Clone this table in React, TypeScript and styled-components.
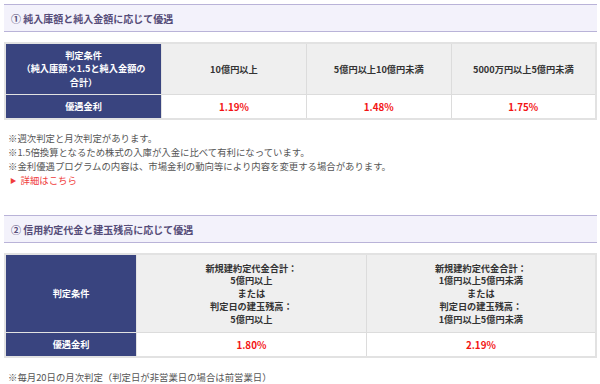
import React from 'react'
import styled, { createGlobalStyle } from 'styled-components'

const GlobalStyle = createGlobalStyle`
  html, body {
    margin: 0;
    padding: 0;
    background: #fff;
  }
  body {
    font-family: "Noto Sans CJK JP", "Noto Sans", sans-serif;
    color: #333;
  }
`

interface RateColumn {
  condition: string[]
  rate: string
}

const inflowColumns: RateColumn[] = [
  { condition: ['10億円以上'], rate: '1.19%' },
  { condition: ['5億円以上10億円未満'], rate: '1.48%' },
  { condition: ['5000万円以上5億円未満'], rate: '1.75%' }
]

const marginColumns: RateColumn[] = [
  {
    condition: ['新規建約定代金合計：', '5億円以上', 'または', '判定日の建玉残高：', '5億円以上'],
    rate: '1.80%'
  },
  {
    condition: ['新規建約定代金合計：', '1億円以上5億円未満', 'または', '判定日の建玉残高：', '1億円以上5億円未満'],
    rate: '2.19%'
  }
]

const Page = styled.div`
  padding: 4px 3px 0 4px;
`

const SectionHeader = styled.h2<{ $gap: number }>`
  margin: ${p => p.$gap}px 0 0;
  height: 26px;
  display: flex;
  align-items: center;
  padding-left: 7px;
  background: #f3f2fb;
  border-top: 1px solid #b9b3d8;
  border-bottom: 1px solid #b9b3d8;
  font-size: 10px;
  font-weight: 700;
  color: #554c78;
`

const Table = styled.table`
  width: 100%;
  margin-top: 10px;
  border-collapse: collapse;
  table-layout: fixed;
  border: 2px solid #e2e2e2;
`

const LabelCell = styled.th<{ $width: number }>`
  width: ${p => p.$width}px;
  background: #39447f;
  color: #fff;
  font-size: 9.2px;
  font-weight: 700;
  line-height: 13.5px;
  text-align: center;
  border: 1px solid #e2e2e2;
  padding: 0 4px;
`

const ConditionCell = styled.td<{ $height: number }>`
  height: ${p => p.$height}px;
  background: #efefef;
  color: #333;
  font-size: 9.2px;
  font-weight: 700;
  line-height: 12.8px;
  text-align: center;
  border: 1px solid #dcdcdc;
  padding: 0;
`

const RateCell = styled.td`
  height: 23px;
  background: #fff;
  color: #f31414;
  font-size: 9.8px;
  font-weight: 700;
  text-align: center;
  border: 1px solid #dcdcdc;
  padding: 0;
`

const Notes = styled.div<{ $top: number }>`
  margin-top: ${p => p.$top}px;
  padding-left: 4px;
  font-size: 9.4px;
  line-height: 14px;
  color: #555;
`

const Note = styled.p`
  margin: 0;
  white-space: nowrap;
`

const DetailLink = styled.a`
  display: flex;
  align-items: center;
  gap: 4px;
  color: #f03c3c;
  text-decoration: none;
  padding-left: 2px;
`

const Arrow = styled.span`
  font-size: 6.5px;
`

const RateTable: React.FC<{ labelWidth: number; conditionLabel: string[]; columns: RateColumn[]; rowHeight: number }> = ({
  labelWidth,
  conditionLabel,
  columns,
  rowHeight
}) => (
  <Table>
    <tbody>
      <tr>
        <LabelCell $width={labelWidth}>
          {conditionLabel.map((line, i) => (
            <div key={i}>{line}</div>
          ))}
        </LabelCell>
        {columns.map((col, i) => (
          <ConditionCell key={i} $height={rowHeight}>
            {col.condition.map((line, j) => (
              <div key={j}>{line}</div>
            ))}
          </ConditionCell>
        ))}
      </tr>
      <tr>
        <LabelCell $width={labelWidth}>優遇金利</LabelCell>
        {columns.map((col, i) => (
          <RateCell key={i}>{col.rate}</RateCell>
        ))}
      </tr>
    </tbody>
  </Table>
)

const App: React.FC = () => (
  <Page>
    <GlobalStyle />
    <SectionHeader $gap={0}>① 純入庫額と純入金額に応じて優遇</SectionHeader>
    <RateTable
      labelWidth={147}
      conditionLabel={['判定条件', '（純入庫額×1.5と純入金額の', '合計）']}
      columns={inflowColumns}
      rowHeight={50}
    />
    <Notes $top={11}>
      <Note>※週次判定と月次判定があります。</Note>
      <Note>※1.5倍換算となるため株式の入庫が入金に比べて有利になっています。</Note>
      <Note>※金利優遇プログラムの内容は、市場金利の動向等により内容を変更する場合があります。</Note>
      <DetailLink href="#">
        <Arrow>▶</Arrow>詳細はこちら
      </DetailLink>
    </Notes>
    <SectionHeader $gap={28}>② 信用約定代金と建玉残高に応じて優遇</SectionHeader>
    <RateTable labelWidth={122} conditionLabel={['判定条件']} columns={marginColumns} rowHeight={77} />
    <Notes $top={12}>
      <Note>※毎月20日の月次判定（判定日が非営業日の場合は前営業日）</Note>
    </Notes>
  </Page>
)

export default App
